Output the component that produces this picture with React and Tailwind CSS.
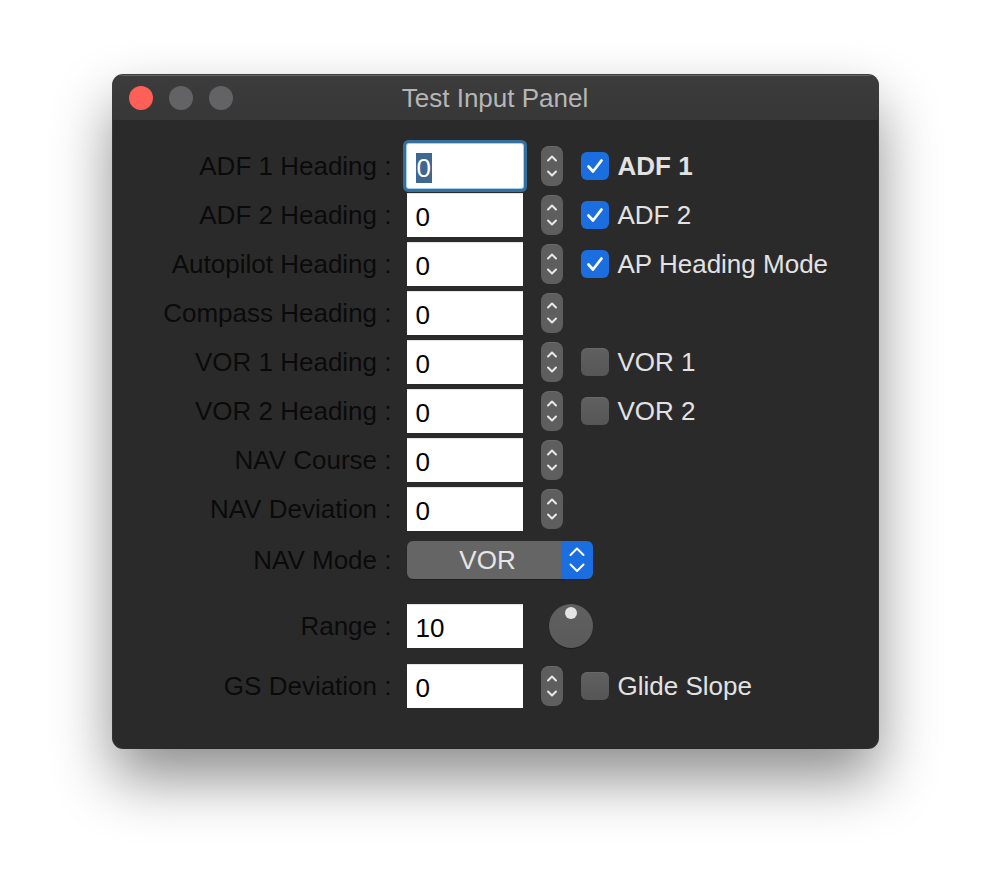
import React from 'react';

const font = { fontFamily: '"Liberation Sans", Arial, sans-serif' };

const Stepper = () => (
    <div className="ml-[18px] w-[22px] h-[40px] rounded-[8px] bg-[#5e5e5e] shadow-[inset_0_1px_0_rgba(255,255,255,0.08)] flex items-center justify-center">
        <svg width="22" height="40" viewBox="0 0 22 40" fill="none">
            <path d="M7 14.5 L11 10.5 L15 14.5" stroke="#e8e8e8" strokeWidth="2" strokeLinecap="round" strokeLinejoin="round" />
            <path d="M7 25.5 L11 29.5 L15 25.5" stroke="#e8e8e8" strokeWidth="2" strokeLinecap="round" strokeLinejoin="round" />
        </svg>
    </div>
);

const Checkbox = ({ checked, label, bold }) => (
    <div className="flex items-center ml-[18px]">
        {checked ? (
            <div className="w-[28px] h-[28px] rounded-[6px] bg-[#1a6ee0] flex items-center justify-center">
                <svg width="28" height="28" viewBox="0 0 28 28" fill="none">
                    <path d="M7.5 14.5 L12 19.5 L20.5 8.5" stroke="#ffffff" strokeWidth="2.8" strokeLinecap="round" strokeLinejoin="round" />
                </svg>
            </div>
        ) : (
            <div className="w-[28px] h-[28px] rounded-[6px] bg-gradient-to-b from-[#606060] to-[#565656] shadow-[inset_0_1px_0_rgba(255,255,255,0.06)]" />
        )}
        <span className={`ml-[9px] text-[26px] text-[#e2e2e2] ${bold ? 'font-bold' : ''}`}>{label}</span>
    </div>
);

const Field = ({ value, focused }) => (
    <div
        className={`ml-[15px] w-[116px] h-[44px] bg-white flex items-center pl-[9px] pt-[4px] text-[26px] text-black ${
            focused
                ? 'rounded-[2px] shadow-[0_0_0_1px_#a6cff0,0_0_0_4px_#356f9c]'
                : 'shadow-[inset_0_2px_1px_-1px_rgba(0,0,0,0.12)]'
        }`}
    >
        {focused ? <span className="bg-[#3e6890] text-white leading-[30px] px-[1px]">{value}</span> : value}
    </div>
);

const Row = ({ label, children, className = 'h-[44px] mt-[5px]' }) => (
    <div className={`flex items-center ${className}`}>
        <div className="w-[279px] text-right text-[26px] text-[#0a0a0a]">{label}</div>
        {children}
    </div>
);

const rows = [
    { label: 'ADF 1 Heading :', focused: true, check: { checked: true, label: 'ADF 1', bold: true } },
    { label: 'ADF 2 Heading :', check: { checked: true, label: 'ADF 2' } },
    { label: 'Autopilot Heading :', check: { checked: true, label: 'AP Heading Mode' } },
    { label: 'Compass Heading :' },
    { label: 'VOR 1 Heading :', check: { checked: false, label: 'VOR 1' } },
    { label: 'VOR 2 Heading :', check: { checked: false, label: 'VOR 2' } },
    { label: 'NAV Course :' },
    { label: 'NAV Deviation :' },
];

const App = () => {
    return (
        <div className="min-h-screen bg-white pt-[75px] flex justify-center" style={font}>
            <div className="w-[765px] h-[673px] rounded-[10px] bg-[#2a2a2a] overflow-hidden flex flex-col shadow-[0_0_0_1px_rgba(0,0,0,0.75),0_30px_60px_rgba(0,0,0,0.45)]">
                {/* title bar */}
                <div className="h-[45px] shrink-0 bg-gradient-to-b from-[#3c3c3c] to-[#373737] shadow-[inset_0_1px_0_rgba(255,255,255,0.22)] grid grid-cols-[1fr_auto_1fr] items-center">
                    <div className="flex items-center gap-[16px] pl-[16px]">
                        <div className="w-[24px] h-[24px] rounded-full bg-[#fe5f57]" />
                        <div className="w-[24px] h-[24px] rounded-full bg-[#636365]" />
                        <div className="w-[24px] h-[24px] rounded-full bg-[#636365]" />
                    </div>
                    <div className="text-[26px] text-[#b6b6b6] pt-[2px]">Test Input Panel</div>
                    <div />
                </div>

                {/* form */}
                <div className="flex flex-col pt-[19px]">
                    {rows.map((r) => (
                        <Row key={r.label} label={r.label}>
                            <Field value="0" focused={r.focused} />
                            <Stepper />
                            {r.check && <Checkbox {...r.check} />}
                        </Row>
                    ))}

                    <Row label="NAV Mode :" className="h-[38px] mt-[10px]">
                        <div className="ml-[15px] w-[186px] h-[38px] rounded-[6px] overflow-hidden flex shadow-[0_1px_1px_rgba(0,0,0,0.3)]">
                            <div className="flex-1 bg-[#656565] flex items-center justify-center pl-[8px] text-[26px] text-[#e6e6e6]">
                                VOR
                            </div>
                            <div className="w-[32px] bg-[#1b6ee0] flex items-center justify-center">
                                <svg width="32" height="38" viewBox="0 0 32 38" fill="none">
                                    <path d="M9.5 14 L16 7.5 L22.5 14" stroke="#ffffff" strokeWidth="2" strokeLinecap="round" strokeLinejoin="round" />
                                    <path d="M9.5 23.5 L16 30 L22.5 23.5" stroke="#ffffff" strokeWidth="2" strokeLinecap="round" strokeLinejoin="round" />
                                </svg>
                            </div>
                        </div>
                    </Row>

                    <Row label="Range :" className="h-[44px] mt-[25px]">
                        <Field value="10" />
                        <div className="ml-[26px] w-[44px] h-[44px] rounded-full bg-gradient-to-b from-[#606060] to-[#5a5a5a] shadow-[0_1px_1px_rgba(0,0,0,0.35)] flex justify-center pt-[3px]">
                            <div className="w-[12px] h-[12px] rounded-full bg-[#e4e4e4]" />
                        </div>
                    </Row>

                    <Row label="GS Deviation :" className="h-[44px] mt-[16px]">
                        <Field value="0" />
                        <Stepper />
                        <Checkbox checked={false} label="Glide Slope" />
                    </Row>
                </div>
            </div>
        </div>
    );
};

export default App;
